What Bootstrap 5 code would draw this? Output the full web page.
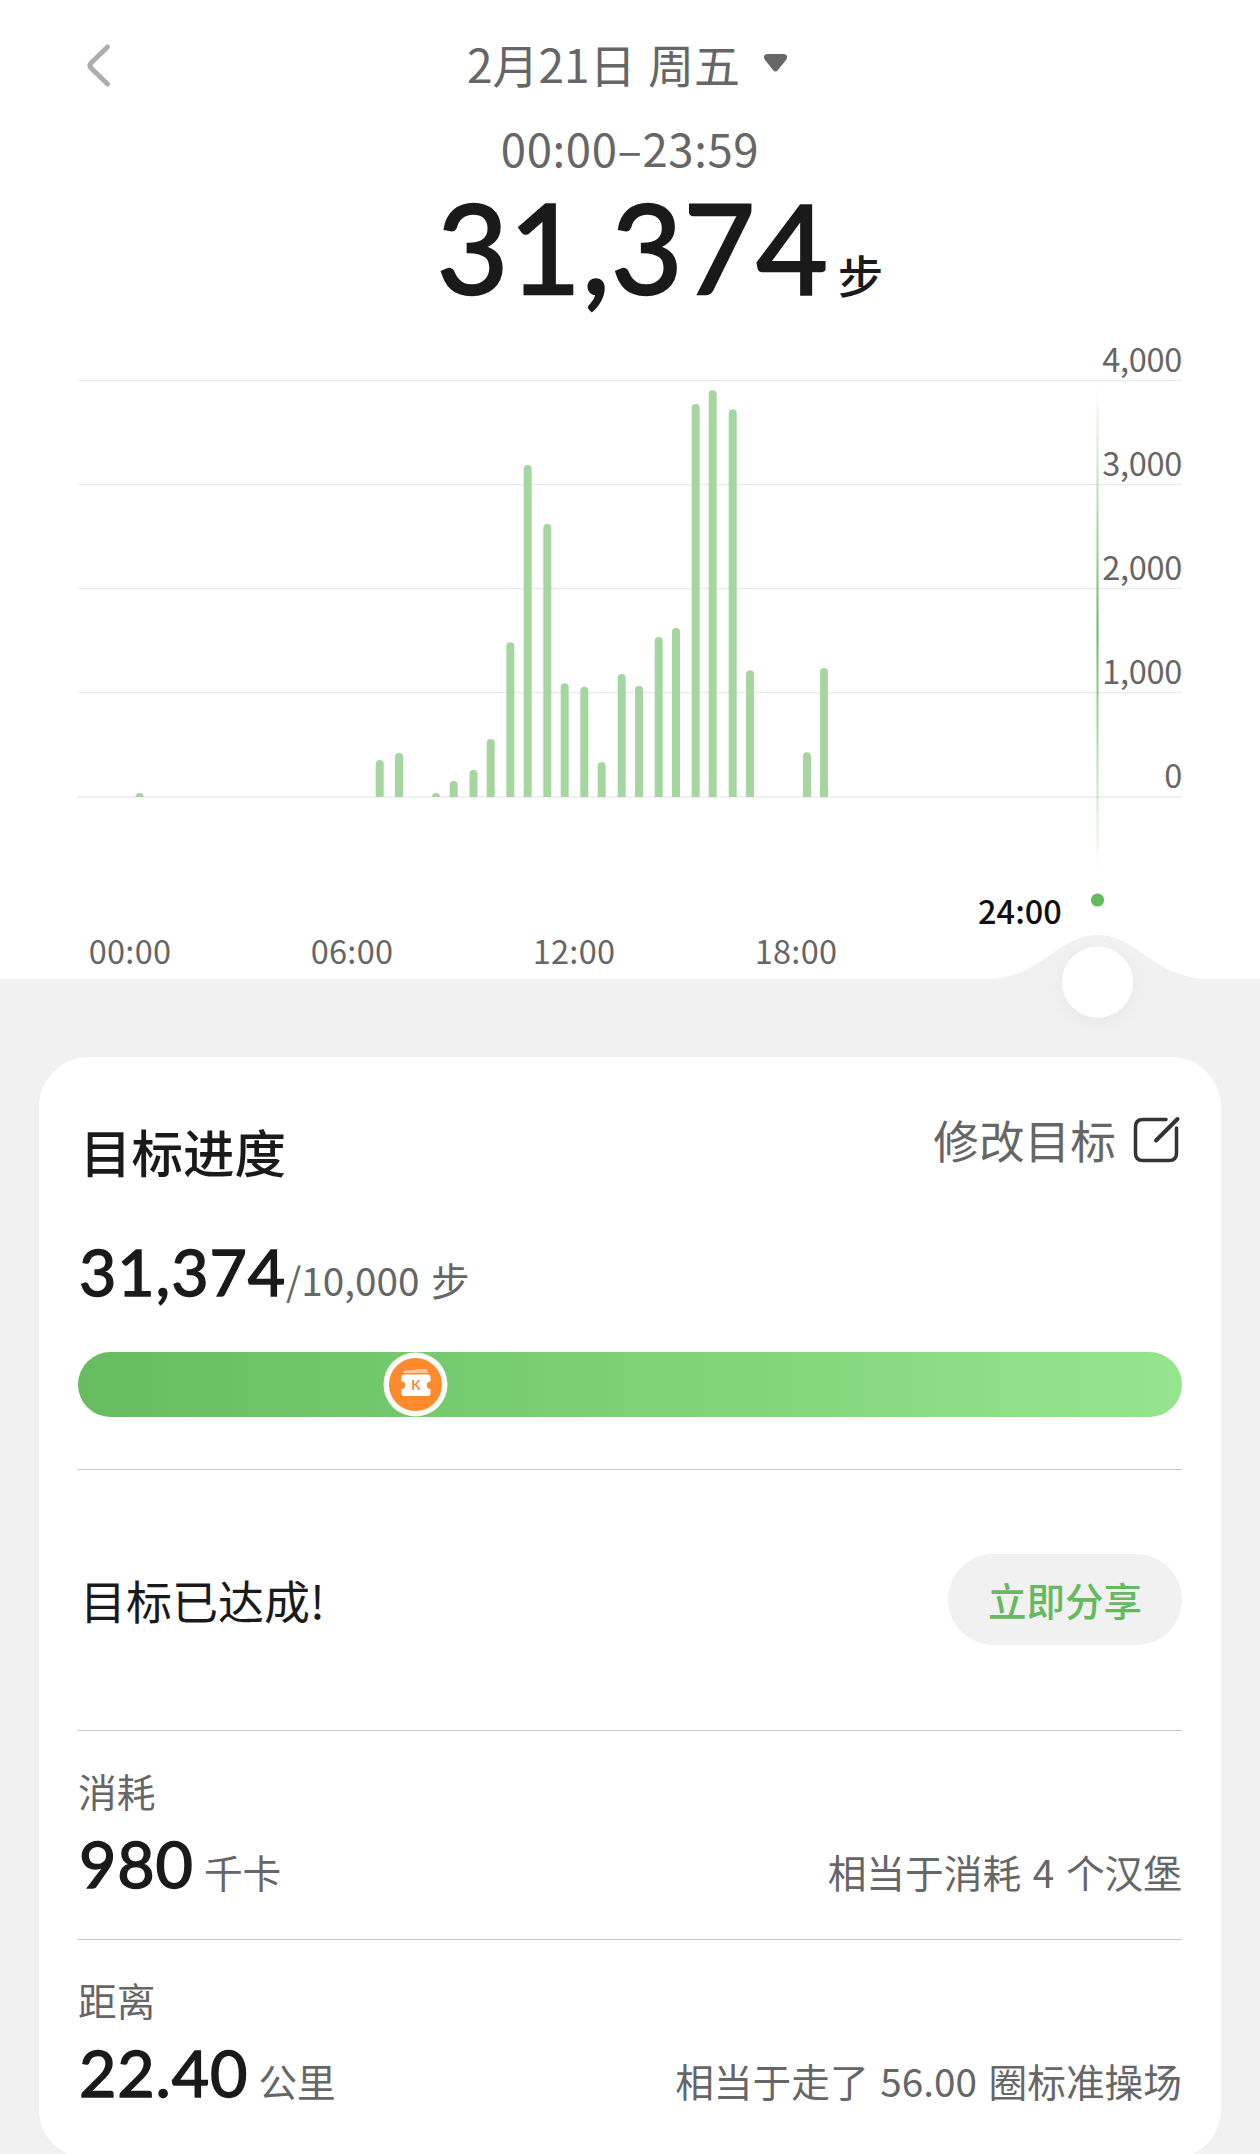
<!DOCTYPE html>
<html lang="zh-CN">
<head>
<meta charset="utf-8">
<meta name="viewport" content="width=device-width, initial-scale=1">
<title>步数</title>
<link href="https://cdn.jsdelivr.net/npm/bootstrap@5.3.0/dist/css/bootstrap.min.css" rel="stylesheet">
<style>
  html, body { height: 2154px; overflow: hidden; }
  body { background: #f1f1f1; color: #1a1a1a; font-family: "Noto Sans CJK SC", sans-serif; line-height: 1; }
  .dim { color: #666; }
  .num { font-family: Lato, "Noto Sans CJK SC", sans-serif; font-weight: 400; }
  .top-panel { height: 979px; }
  .title-bar { height: 125px; padding: 0 124px 0 78px; }
  .date-text { font-size: 46px; word-spacing: 2px; padding-top: 1px; }
  .time-text { font-size: 45.5px; height: 46px; line-height: 45px; letter-spacing: .6px; }
  .total-row { height: 153px; padding: 14px 0 0 60px; }
  .total-num { font-size: 123.5px; letter-spacing: 1px; -webkit-text-stroke: 2.4px #1a1a1a; }
  .total-unit { font-size: 45.5px; font-weight: 500; margin-left: 9px; }
  .chart { display: block; }
  .goal-card { margin: 78px 39px 0; height: 1102px; padding: 0 39px; border-radius: 50px; }
  .goal-head { height: 166px; }
  .goal-title { font-size: 51.5px; font-weight: 500; padding: 21px 0 0 2px; }
  .goal-edit { font-size: 45.7px; padding-right: 1px; }
  .edit-icon { margin-left: 15px; }
  .goal-count { height: 129px; padding-top: 16px; }
  .mid-num { font-size: 64.5px; letter-spacing: .9px; padding-left: 1px; -webkit-text-stroke: 1.5px #1a1a1a; }
  .unit { font-size: 38.7px; word-spacing: 3px; }
  .goal-bar { height: 65px; margin-bottom: 52px; border-radius: 33px; background: linear-gradient(90deg, #66bc5f, #95e58f); padding-left: 305px; }
  .rule { height: 1px; background: #c6c6c6; }
  .done-row { height: 260px; padding-bottom: 2px; }
  .done-text { font-size: 46px; padding: 0 0 1px 2px; }
  .share-btn { width: 234px; height: 91px; border-radius: 46px; background: #f1f1f1; color: #65b95f; font-size: 38.5px; font-weight: 500; line-height: 1; }
  .stat { height: 208px; padding-top: 40px; }
  .stat-row { margin-top: 21px; }
  .stat-unit { margin-left: 10px; }
</style>
</head>
<body>
<section class="top-panel bg-white">
  <header class="title-bar d-flex align-items-center">
    <svg width="40" height="50" viewBox="0 0 40 50" fill="none" stroke="#adadad" stroke-width="5" stroke-linecap="round" stroke-linejoin="round"><path d="M29.500 9L13 25Q11 27.500 13 30L29.500 46"/></svg>
    <div class="flex-grow-1 d-flex justify-content-center align-items-center dim">
      <span class="date-text">2月21日 周五</span>
      <svg class="ms-4" width="23" height="18" viewBox="0 0 23 18" fill="#666"><path d="M3 0H20Q25 1 22 6L14 16Q11.500 19 9 16L1 6Q-2 1 3 0Z"/></svg>
    </div>
  </header>
  <div class="time-text text-center dim">00:00–23:59</div>
  <div class="total-row d-flex justify-content-center align-items-baseline">
    <span class="num total-num">31,374</span><span class="total-unit">步</span>
  </div>
  <svg class="chart" width="1260" height="655" viewBox="0 324 1260 655" font-family="'Noto Sans CJK SC', sans-serif">
    <defs>
      <linearGradient id="cursor" x1="0" y1="385" x2="0" y2="872" gradientUnits="userSpaceOnUse">
        <stop offset="0" stop-color="#65b95f" stop-opacity="0"/><stop offset=".5" stop-color="#65b95f"/><stop offset="1" stop-color="#65b95f" stop-opacity="0"/>
      </linearGradient>
      <filter id="soft" x="-50%" y="-50%" width="200%" height="200%"><feDropShadow dx="0" dy="5" stdDeviation="8" flood-color="#000" flood-opacity=".035"/></filter>
    </defs>
    <path d="M78 380.500H1182M78 484.500H1182M78 588.500H1182M78 692.500H1182M78 797H1182" stroke="#ebebeb" stroke-width="1.500"/>
    <g id="bars" fill="#a5d6a0"></g>
    <rect x="1096.500" y="385" width="2" height="487" fill="url(#cursor)"/>
    <g font-size="32.500" fill="#666" text-anchor="end" letter-spacing="-.3">
      <text x="1182" y="372">4,000</text><text x="1182" y="476">3,000</text><text x="1182" y="580">2,000</text><text x="1182" y="684">1,000</text><text x="1182" y="788">0</text>
    </g>
    <g font-size="32.500" fill="#666" text-anchor="middle" letter-spacing=".3">
      <text x="130" y="964">00:00</text><text x="352" y="964">06:00</text><text x="574" y="964">12:00</text><text x="796" y="964">18:00</text>
      <text x="1020" y="924" fill="#111" font-weight="500" letter-spacing="0">24:00</text>
    </g>
    <circle cx="1097.500" cy="900" r="6.600" fill="#65b95f"/>
  </svg>
</section>
<div class="position-relative">
  <svg class="position-absolute start-0" style="top:-54px" width="1260" height="120" viewBox="0 925 1260 120">
    <path d="M982 979.500C1042 979.500 1056 935 1097.500 935C1139 935 1153 979.500 1213 979.500Z" fill="#f1f1f1"/>
    <circle cx="1097.500" cy="982" r="36.500" fill="#e9e9e9" filter="url(#soft)"/>
    <circle cx="1097.500" cy="982" r="35.700" fill="#fff"/>
  </svg>
</div>
<main class="goal-card bg-white">
  <div class="goal-head d-flex justify-content-between">
    <h2 class="goal-title mb-0 d-flex align-items-center">目标进度</h2>
    <div class="goal-edit dim d-flex align-items-center">
      <span>修改目标</span>
      <svg class="edit-icon" width="50" height="50" viewBox="0 0 50 50" fill="none" stroke="#333" stroke-width="3.500" stroke-linecap="round"><path d="M35 4.500H12Q4.500 4.500 4.500 12V38Q4.500 45.500 12 45.500H38Q45.500 45.500 45.500 38V13"/><path d="M25 25.500L46.500 4" stroke-width="4"/></svg>
    </div>
  </div>
  <div class="goal-count d-flex align-items-baseline">
    <span class="num mid-num">31,374</span><span class="unit dim">/10,000 步</span>
  </div>
  <div class="goal-bar">
    <svg width="65" height="65" viewBox="0 0 65 65"><circle cx="32.500" cy="32.500" r="32" fill="#fffdf6"/><circle cx="32.500" cy="32.500" r="26.500" fill="#fd8a2c"/><path d="M20 21Q20 18.500 23 18.500L42 17Q45 17 45 21Z" fill="#ffc899"/><path d="M21 22.500H45Q47.500 22.500 47.500 25V29.500A3.300 3.300 0 0 0 47.500 37V41.500Q47.500 44 45 44H21Q18.500 44 18.500 41.500V37A3.300 3.300 0 0 0 18.500 29.500V25Q18.500 22.500 21 22.500Z" fill="#fff"/><text x="33" y="38" text-anchor="middle" font-family="Lato, sans-serif" font-weight="700" font-size="13.500" fill="#f08a3c">K</text></svg>
  </div>
  <div class="rule"></div>
  <div class="done-row d-flex align-items-center justify-content-between">
    <span class="done-text">目标已达成!</span>
    <button class="btn share-btn border-0 p-0">立即分享</button>
  </div>
  <div class="rule"></div>
  <div class="stat">
    <div class="unit dim">消耗</div>
    <div class="stat-row d-flex align-items-baseline">
      <span class="num mid-num">980</span><span class="unit stat-unit dim">千卡</span>
      <span class="unit dim ms-auto">相当于消耗 4 个汉堡</span>
    </div>
  </div>
  <div class="rule"></div>
  <div class="stat">
    <div class="unit dim">距离</div>
    <div class="stat-row d-flex align-items-baseline">
      <span class="num mid-num">22.40</span><span class="unit stat-unit dim">公里</span>
      <span class="unit dim ms-auto">相当于走了 56.00 圈标准操场</span>
    </div>
  </div>
</main>
<script>
  // Each entry: horizontal centre and top of one half-hour bar; the baseline is y = 797
  const bars = [[139.7,793],[379.7,760],[399,753],[436,793],[453.7,781],[473.5,770],[490.7,739],[510.3,642.3],[527.7,465],[547.3,524],[564.7,683.3],[584.3,686.7],[601.7,762],[621.7,674],[639,685.7],[658.7,637],[676,628],[695.7,404],[712.7,390.3],[732.7,409.3],[750,670.3],[807,752.3],[824,668]];
  document.getElementById('bars').innerHTML = bars.map(([x, y]) =>
    `<path d="M${x-4} 797V${y+4}A4 4 0 0 1 ${x+4} ${y+4}V797Z"/>`).join('');
</script>
<script src="https://cdn.jsdelivr.net/npm/bootstrap@5.3.0/dist/js/bootstrap.bundle.min.js"></script>
</body>
</html>
